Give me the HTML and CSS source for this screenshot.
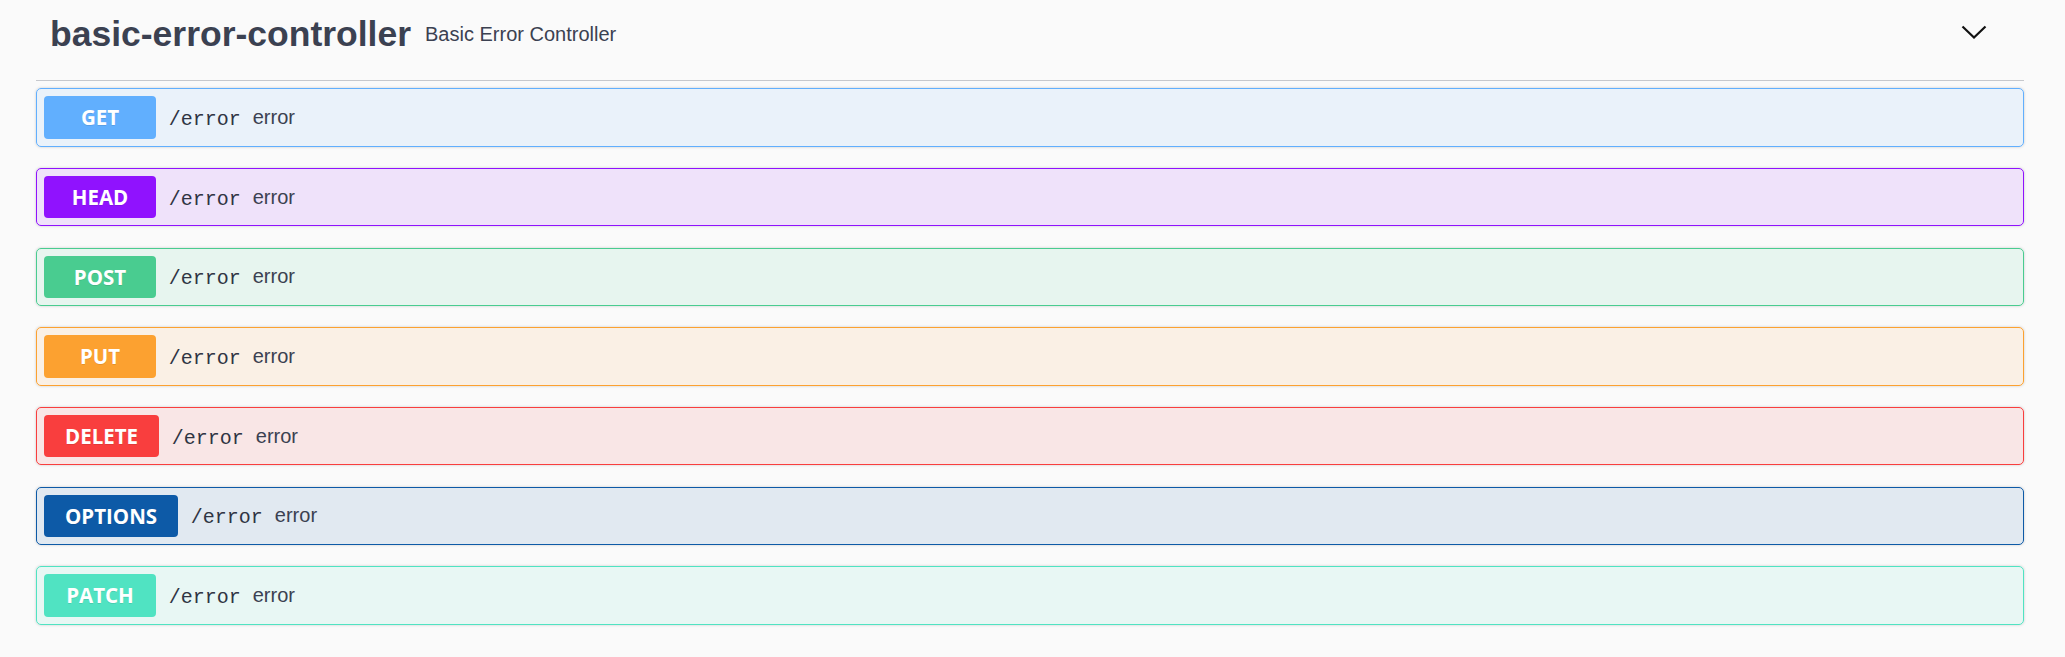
FILE: index.html
```html
<!DOCTYPE html>
<html lang="en">
<head>
<meta charset="utf-8">
<title>basic-error-controller</title>
<link rel="stylesheet" href="styles.css">
</head>
<body>
<section class="tag-section">
  <header class="tag-header">
    <h3 class="tag-title">basic-error-controller</h3>
    <span class="tag-desc">Basic Error Controller</span>
    <svg class="tag-arrow" width="26" height="14" viewBox="0 0 26 14" aria-hidden="true">
      <polyline points="1.5,1.5 13,12.5 24.5,1.5" fill="none" stroke="#111" stroke-width="2.2"/>
    </svg>
  </header>
  <div class="ops">
    <div class="op op-get"><span class="method">GET</span><span class="path">/error</span><span class="summary">error</span></div>
    <div class="op op-head"><span class="method">HEAD</span><span class="path">/error</span><span class="summary">error</span></div>
    <div class="op op-post"><span class="method">POST</span><span class="path">/error</span><span class="summary">error</span></div>
    <div class="op op-put"><span class="method">PUT</span><span class="path">/error</span><span class="summary">error</span></div>
    <div class="op op-delete"><span class="method">DELETE</span><span class="path">/error</span><span class="summary">error</span></div>
    <div class="op op-options"><span class="method">OPTIONS</span><span class="path">/error</span><span class="summary">error</span></div>
    <div class="op op-patch"><span class="method">PATCH</span><span class="path">/error</span><span class="summary">error</span></div>
  </div>
</section>
</body>
</html>
```

FILE: styles.css
```css
html, body {
  margin: 0;
  padding: 0;
  background: #fafafa;
}

body {
  padding: 0 41px 0 36px;
  color: #3b4151;
  font-family: "Liberation Sans", Arial, sans-serif;
}

.tag-header {
  display: flex;
  align-items: center;
  box-sizing: border-box;
  height: 81px;
  padding: 14.4px 38px 25.6px 14px;
  border-bottom: 1px solid #c6c8cd;
  margin-bottom: 7.3px;
}

.tag-title {
  margin: 0;
  font-family: "Liberation Sans", Arial, sans-serif;
  font-weight: 700;
  font-size: 35.5px;
  line-height: 40px;
  color: #3b4151;
  white-space: nowrap;
}

.tag-desc {
  flex: 1;
  margin-left: 14px;
  font-size: 20px;
  line-height: 24px;
  color: #3b4151;
}

.tag-arrow {
  display: block;
  margin-top: -4px;
  margin-right: -1px;
}

.ops {
  display: flex;
  flex-direction: column;
}

.op {
  display: flex;
  align-items: center;
  padding: 7px;
  border: 1px solid;
  border-radius: 5px;
  margin-bottom: 21.27px;
  box-shadow: 0 0 3px rgba(0, 0, 0, 0.19);
}

.method {
  box-sizing: border-box;
  min-width: 112px;
  height: 42.4px;
  padding: 0 21px;
  border-radius: 4px;
  display: flex;
  align-items: center;
  justify-content: center;
  font-family: "Open Sans", "Noto Sans", sans-serif;
  font-weight: 700;
  font-size: 20.5px;
  color: #fff;
  text-shadow: 0 1px 0 rgba(0, 0, 0, 0.1);
}

.path {
  margin-left: 12.7px;
  padding-top: 4px;
  font-family: "Liberation Mono", "Courier New", monospace;
  font-weight: 400;
  font-size: 20px;
  color: #2f3443;
}

.summary {
  margin-left: 12px;
  font-size: 20px;
  color: #3b4151;
}

.op-get { border-color: #61affe; background: rgba(97, 175, 254, 0.1); }
.op-get .method { background: #61affe; }

.op-head { border-color: #9012fe; background: rgba(144, 18, 254, 0.1); }
.op-head .method { background: #9012fe; }

.op-post { border-color: #49cc90; background: rgba(73, 204, 144, 0.1); }
.op-post .method { background: #49cc90; }

.op-put { border-color: #fca130; background: rgba(252, 161, 48, 0.1); }
.op-put .method { background: #fca130; }

.op-delete { border-color: #f93e3e; background: rgba(249, 62, 62, 0.1); }
.op-delete .method { background: #f93e3e; }

.op-options { border-color: #0d5aa7; background: rgba(13, 90, 167, 0.1); }
.op-options .method { background: #0d5aa7; }

.op-patch { border-color: #50e3c2; background: rgba(80, 227, 194, 0.1); }
.op-patch .method { background: #50e3c2; }
```
